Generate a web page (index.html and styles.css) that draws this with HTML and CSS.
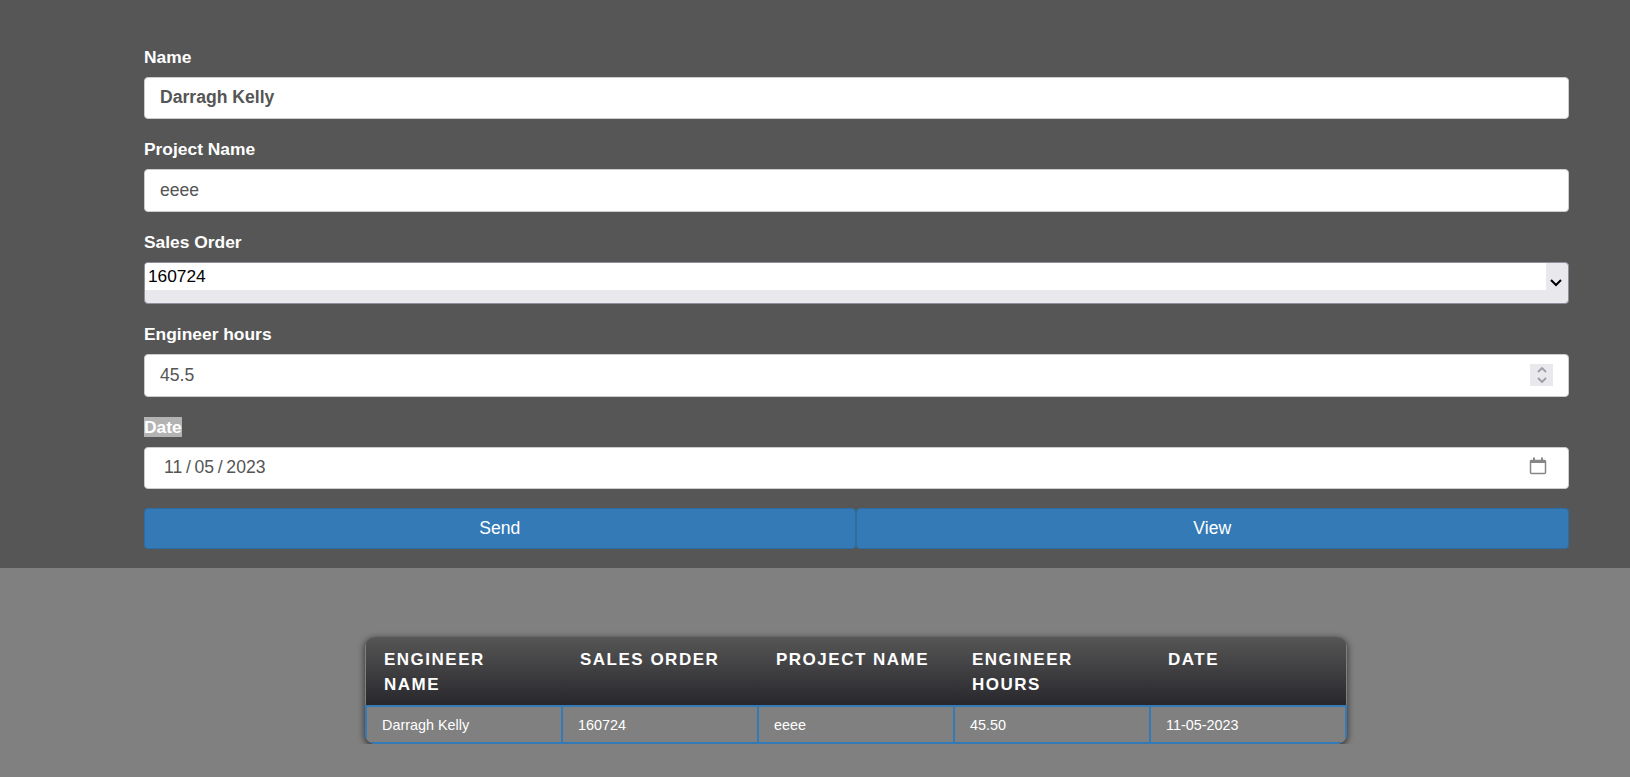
FILE: index.html
```html
<!DOCTYPE html>
<html lang="en">
<head>
  <meta charset="UTF-8">
  <title>Engineer Hours</title>
  <link rel="stylesheet" href="styles.css">
</head>
<body>

  <div class="form-panel">
    <form class="hours-form">
      <div class="form-group">
        <label class="form-label">Name</label>
        <div class="field"><input class="field-input field-input-bold" type="text" value="Darragh Kelly"></div>
      </div>

      <div class="form-group">
        <label class="form-label">Project Name</label>
        <div class="field"><input class="field-input" type="text" value="eeee"></div>
      </div>

      <div class="form-group">
        <label class="form-label">Sales Order</label>
        <div class="select-box">
          <div class="select-value">160724</div>
          <div class="select-arrow">
            <svg width="14" height="9" viewBox="0 0 14 9"><path d="M2 2l5 5 5-5" fill="none" stroke="#000" stroke-width="2"/></svg>
          </div>
        </div>
      </div>

      <div class="form-group">
        <label class="form-label">Engineer hours</label>
        <div class="field">
          <input class="field-input" type="text" value="45.5">
          <div class="spinner">
            <svg width="12" height="18" viewBox="0 0 12 18"><path d="M2 6l4-4 4 4M2 12l4 4 4-4" fill="none" stroke="#9d9ba8" stroke-width="1.8"/></svg>
          </div>
        </div>
      </div>

      <div class="form-group">
        <label class="form-label"><span class="selected-text">Date</span></label>
        <div class="field">
          <input class="field-input field-input-date" type="text" value="11 / 05 / 2023">
          <svg class="calendar-icon" width="18" height="18" viewBox="0 0 18 18"><path d="M1.500 4.500a1 1 0 0 1 1-1h13a1 1 0 0 1 1 1v11a1 1 0 0 1-1 1h-13a1 1 0 0 1-1-1z" fill="none" stroke="#868686" stroke-width="1.5"/><path d="M1 3h16v3H1zM4 .5h2V4H4zM12 .5h2V4h-2z" fill="#868686"/></svg>
        </div>
      </div>

      <div class="button-row">
        <button class="btn" type="button">Send</button>
        <button class="btn" type="button">View</button>
      </div>
    </form>
  </div>

  <div class="table-wrap">
    <table class="hours-table">
      <thead>
        <tr>
          <th>Engineer Name</th>
          <th>Sales Order</th>
          <th>Project Name</th>
          <th>Engineer Hours</th>
          <th>Date</th>
        </tr>
      </thead>
      <tbody>
        <tr>
          <td>Darragh Kelly</td>
          <td>160724</td>
          <td>eeee</td>
          <td>45.50</td>
          <td>11-05-2023</td>
        </tr>
      </tbody>
    </table>
  </div>

</body>
</html>
```

FILE: styles.css
```css
body {
  font-family: "Liberation Sans", Arial, sans-serif;
  background-color: #808080;
  margin: 0;
}

.form-panel {
  background-color: #565656;
  padding: 46.6px 61px 19.4px 144px;
}

.form-group {
  margin-bottom: 20px;
}

.form-label {
  display: block;
  margin-bottom: 10px;
  color: #fff;
  font-size: 17.4px;
  font-weight: bold;
  line-height: 20px;
}

.selected-text {
  display: inline-block;
  background-color: #b3b3b3;
}

.field {
  display: flex;
  align-items: center;
  height: 42.5px;
  box-sizing: border-box;
  background-color: #fff;
  border: 1px solid #ccc;
  border-radius: 4px;
  padding-right: 15px;
}

.field-input {
  flex: 1;
  min-width: 0;
  border: none;
  outline: none;
  background: transparent;
  padding: 0 15px;
  color: #555;
  font-family: inherit;
  font-size: 17.6px;
}

.field-input-bold {
  font-weight: bold;
}

.field-input-date {
  padding-left: 19px;
  word-spacing: -1.2px;
}

.select-box {
  display: flex;
  height: 42.5px;
  box-sizing: border-box;
  background-color: #e9e8ed;
  border: 1px solid #8f8f9d;
  border-radius: 4px;
  overflow: hidden;
}

.select-value {
  flex: 1;
  height: 27px;
  background-color: #fff;
  padding-left: 3px;
  color: #000;
  font-size: 17.3px;
  line-height: 27px;
}

.select-arrow {
  display: flex;
  justify-content: center;
  align-items: center;
  width: 22px;
  padding-right: 2px;
  box-sizing: border-box;
}

.spinner {
  display: flex;
  justify-content: center;
  align-items: center;
  width: 23px;
  height: 22px;
  background-color: #e9e9ed;
}

.calendar-icon {
  margin: -3px 6px 0 0;
}

.button-row {
  display: grid;
  grid-template-columns: 711.5px 1fr;
  margin-top: -1.500px;
}

.btn {
  height: 41.5px;
  background-color: #337ab7;
  border: 1px solid #2e6da4;
  border-radius: 4px;
  color: #fff;
  font-family: inherit;
  font-size: 17.6px;
}

.table-wrap {
  width: 982px;
  margin: 69px 0 0 365px;
  border-radius: 10px;
  overflow: hidden;
  box-shadow: 0 2px 6px 1px rgba(0, 0, 0, 0.55);
}

.hours-table {
  width: 100%;
  table-layout: fixed;
  border-collapse: collapse;
}

.hours-table th {
  height: 68.5px;
  box-sizing: border-box;
  padding: 9.5px 18px 0;
  background: linear-gradient(#565656, #28272c);
  color: #fff;
  font-size: 17px;
  line-height: 25px;
  letter-spacing: 1.5px;
  text-align: left;
  text-transform: uppercase;
  vertical-align: top;
}

.hours-table td {
  height: 33px;
  padding: 2px 15px 0;
  border: 2px solid #337ab7;
  color: #fff;
  font-size: 14.4px;
}
```
